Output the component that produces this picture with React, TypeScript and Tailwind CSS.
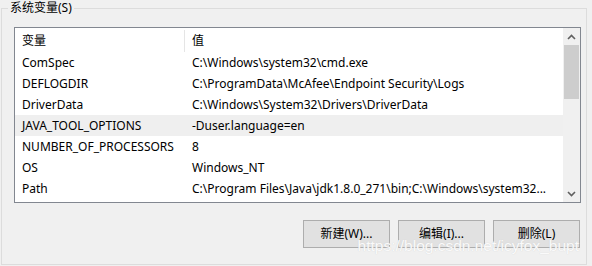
import React from 'react';

const rows: [string, string][] = [
  ['ComSpec', 'C:\\Windows\\system32\\cmd.exe'],
  ['DEFLOGDIR', 'C:\\ProgramData\\McAfee\\Endpoint Security\\Logs'],
  ['DriverData', 'C:\\Windows\\System32\\Drivers\\DriverData'],
  ['JAVA_TOOL_OPTIONS', '-Duser.language=en'],
  ['NUMBER_OF_PROCESSORS', '8'],
  ['OS', 'Windows_NT'],
  ['Path', 'C:\\Program Files\\Java\\jdk1.8.0_271\\bin;C:\\Windows\\system32...'],
];

const font = { fontFamily: '"Segoe UI", "Noto Sans", "Noto Sans CJK SC", sans-serif' };

export default function App() {
  return (
    <div className="w-[592px] h-[266px] bg-[#f0f0f0] text-[12px] text-black overflow-hidden" style={font}>
      <div className="relative ml-[1px] mt-[8px] w-[586px] h-[257px] border border-[#dcdcdc] pt-[18px] pl-[12px]">
        <span className="absolute -top-[9px] left-[6px] bg-[#f0f0f0] px-[2px] leading-[16px]">系统变量(S)</span>

        <div className="w-[567px] h-[176px] border border-[#828790] bg-white flex">
          <div className="flex-1 flex flex-col">
            <div className="h-[24px] flex items-center">
              <div className="w-[169px] pl-[7px] pt-[2px] leading-none">变量</div>
              <div className="w-px h-[22px] bg-[#e5e5e5] self-end"></div>
              <div className="pl-[7px] pt-[2px] leading-none">值</div>
            </div>
            {rows.map(([k, v], i) => (
              <div key={k} className={`h-[21px] flex items-center pt-[1px] ${i === 3 ? 'bg-[#efefef]' : ''}`}>
                <div className="w-[170px] pl-[7px] whitespace-nowrap">{k}</div>
                <div className="pl-[7px] whitespace-nowrap">{v}</div>
              </div>
            ))}
          </div>
          <div className="w-[17px] bg-[#f0f0f0] flex flex-col items-center">
            <div className="h-[17px] w-full flex items-center justify-center">
              <svg width="9" height="6" viewBox="0 0 9 6">
                <path d="M1 5 L4.5 1.5 L8 5" stroke="#606060" strokeWidth="1.6" fill="none" />
              </svg>
            </div>
            <div className="w-[15px] h-[54px] bg-[#cdcdcd]"></div>
            <div className="flex-1"></div>
            <div className="h-[17px] w-full flex items-center justify-center">
              <svg width="9" height="6" viewBox="0 0 9 6">
                <path d="M1 1 L4.5 4.5 L8 1" stroke="#606060" strokeWidth="1.6" fill="none" />
              </svg>
            </div>
          </div>
        </div>

        <div className="relative flex justify-end gap-[8px] mt-[17px] pr-[6px]">
          <button className="w-[87px] h-[28px] bg-[#e1e1e1] border border-[#adadad]">新建(W)...</button>
          <button className="w-[87px] h-[28px] bg-[#e1e1e1] border border-[#adadad]">编辑(I)...</button>
          <button className="w-[87px] h-[28px] bg-[#e1e1e1] border border-[#adadad]">删除(L)</button>
          <span
            className="absolute right-[7px] top-[18px] text-[15.5px] leading-none text-white/90 pointer-events-none"
            style={{ fontFamily: '"Liberation Sans", Arial, sans-serif', textShadow: '0 0 1px #c8c8c8' }}
          >
            https://blog.csdn.net/icyfox_bupt
          </span>
        </div>
      </div>
    </div>
  );
}
